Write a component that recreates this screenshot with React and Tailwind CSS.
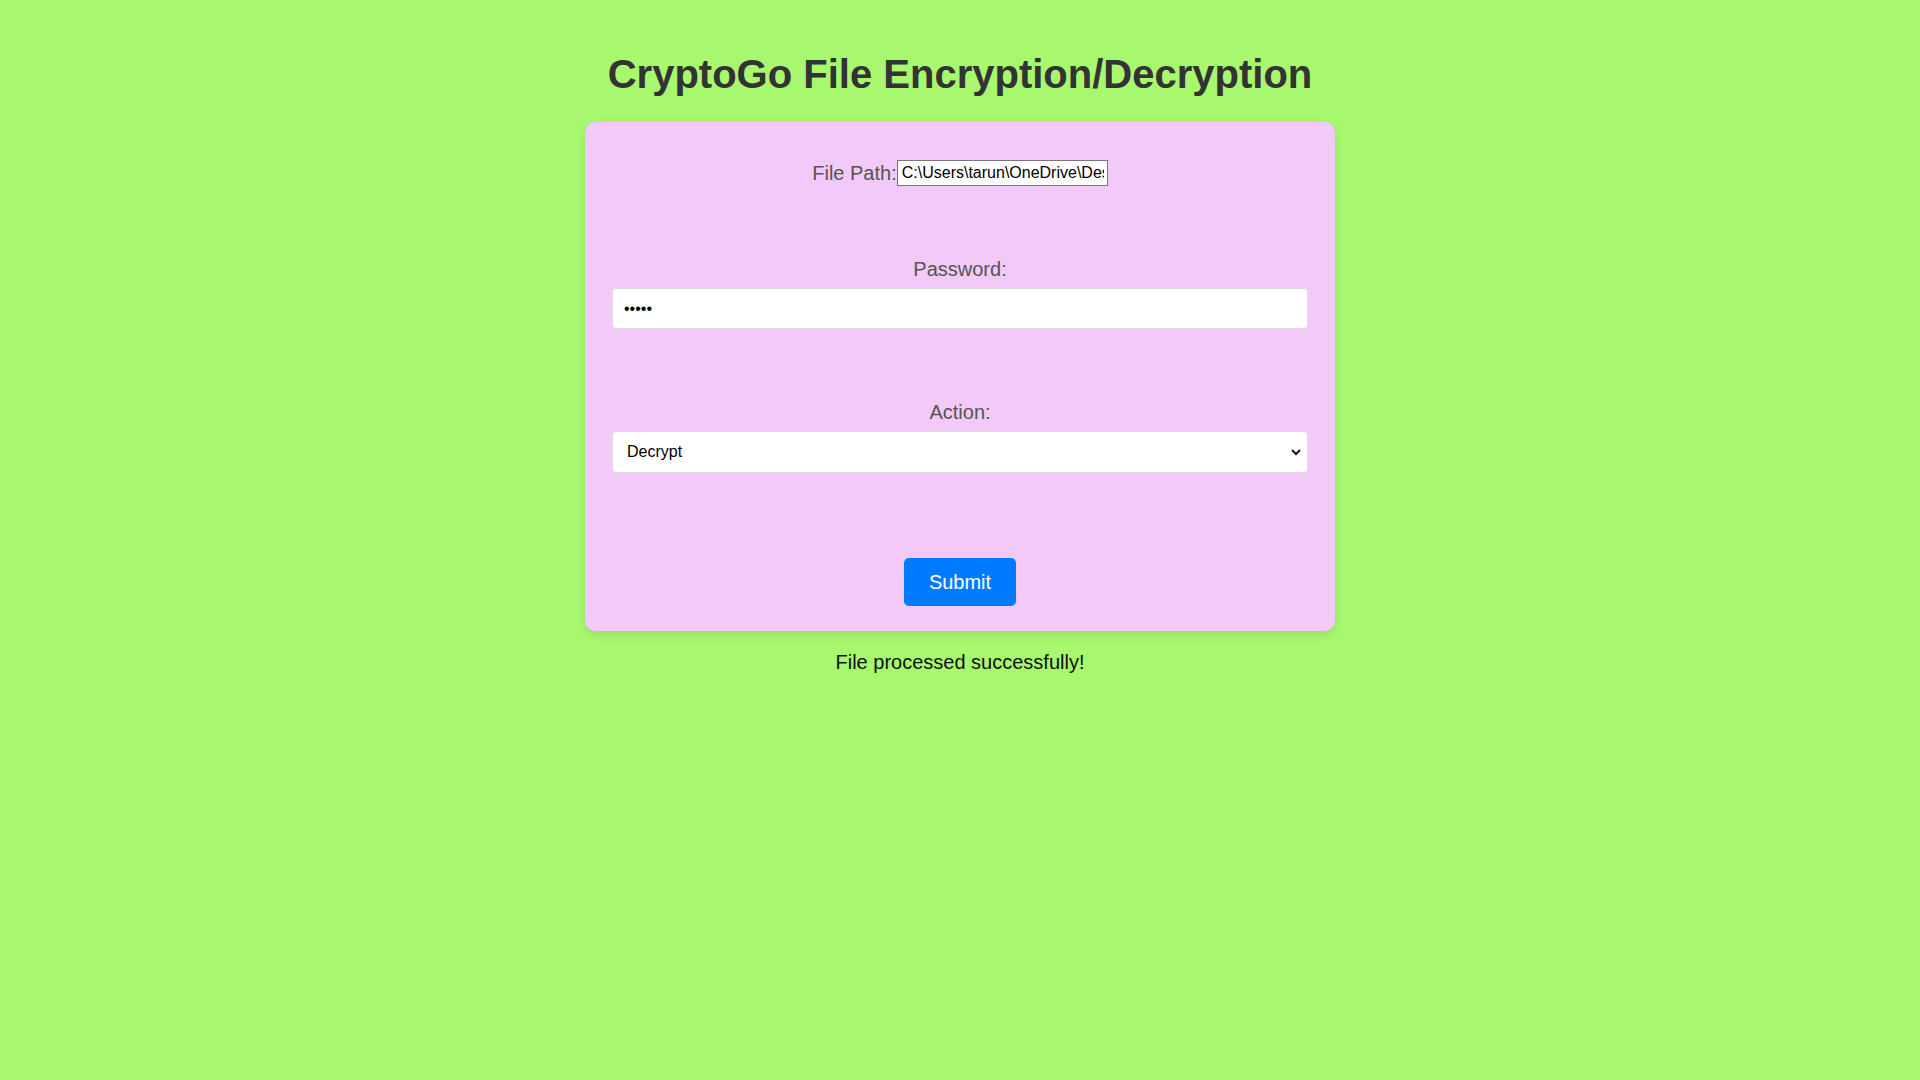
import { useState } from 'react'

export default function App() {
  const [filePath, setFilePath] = useState('C:\\Users\\tarun\\OneDrive\\Desktop\\secret.txt')
  const [password, setPassword] = useState('12345')
  const [action, setAction] = useState('decrypt')

  return (
    <div className="min-h-screen bg-[#a7f76f] pt-[51px] font-['Liberation_Sans',Arial,sans-serif]">
      <h1 className="mb-[25px] text-center text-[40px] leading-[46px] font-bold text-[#333]">
        CryptoGo File Encryption/Decryption
      </h1>

      <form
        onSubmit={(e) => e.preventDefault()}
        className="mx-auto w-[750px] rounded-[10px] bg-[#f2c9f8] px-[27px] pt-[38px] pb-[25px] shadow-[0_4px_10px_rgba(0,0,0,0.1)]"
      >
        <div className="flex items-center justify-center">
          <label className="text-[20px] leading-[23px] text-[#555]">File Path:</label>
          <input
            type="text"
            value={filePath}
            onChange={(e) => setFilePath(e.target.value)}
            className="h-[26px] w-[211px] border border-[#767676] bg-white pr-[3px] pl-[4px] text-[16px] text-black outline-none"
          />
        </div>

        <div className="mt-[72px] flex flex-col items-center gap-[7px]">
          <label className="text-[20px] leading-[23px] text-[#555]">Password:</label>
          <input
            type="password"
            value={password}
            onChange={(e) => setPassword(e.target.value)}
            className="h-[41px] w-full rounded-[4px] border border-[#ddd] bg-white px-[11px] text-[16px] text-black outline-none"
          />
        </div>

        <div className="mt-[72px] flex flex-col items-center gap-[7px]">
          <label className="text-[20px] leading-[23px] text-[#555]">Action:</label>
          <div className="relative w-full">
            <select
              value={action}
              onChange={(e) => setAction(e.target.value)}
              className="h-[42px] w-full appearance-none rounded-[4px] border border-[#ddd] bg-white pl-[14px] text-[16px] text-black outline-none"
            >
              <option value="encrypt">Encrypt</option>
              <option value="decrypt">Decrypt</option>
            </select>
            <svg
              className="pointer-events-none absolute top-[16px] right-[6px]"
              width="12"
              height="10"
              viewBox="0 0 12 10"
              fill="none"
              stroke="#111"
              strokeWidth="2"
            >
              <path d="M2 3l4 4 4-4" />
            </svg>
          </div>
        </div>

        <div className="mt-[85px] flex justify-center">
          <button
            type="submit"
            className="h-[48px] w-[112px] rounded-[5px] bg-[#007bff] text-[20px] text-white"
          >
            Submit
          </button>
        </div>
      </form>

      <p className="mt-[20px] text-center text-[20px] leading-[23px] text-[#111]">
        File processed successfully!
      </p>
    </div>
  )
}
